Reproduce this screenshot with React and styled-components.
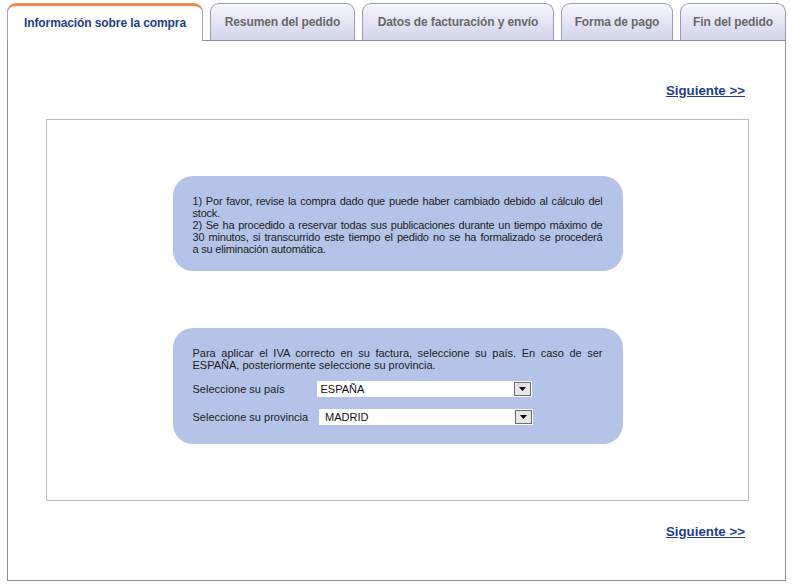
import React from "react";
import styled, { createGlobalStyle } from "styled-components";

const GlobalStyle = createGlobalStyle`
  html, body { margin: 0; padding: 0; background: #ffffff; }
  body { font-family: "Liberation Sans", Arial, sans-serif; }
`;

const Wrapper = styled.div`
  width: 779px;
  margin: 3px 0 0 7px;
`;

const TabBar = styled.div`
  display: flex;
  align-items: flex-end;
  gap: 7px;
  height: 37px;
  border-bottom: 1px solid #8c8ca6;
`;

const Tab = styled.div`
  box-sizing: border-box;
  width: ${(p) => p.$w}px;
  height: ${(p) => (p.$active ? 38 : 37)}px;
  margin-bottom: ${(p) => (p.$active ? -1 : 0)}px;
  display: flex;
  align-items: center;
  justify-content: center;
  font-size: 12px;
  font-weight: bold;
  letter-spacing: -0.1px;
  white-space: nowrap;
  border-radius: 9px 9px 0 0;
  border: 1px solid ${(p) => (p.$active ? "#a2a2b0" : "#9a9ab6")};
  border-bottom: none;
  border-top: ${(p) => (p.$active ? "3px solid #ee8a4e" : "1px solid #9a9ab6")};
  padding-bottom: ${(p) => (p.$active ? 2 : 0)}px;
  color: ${(p) => (p.$active ? "#1f3d8c" : "#686868")};
  background: ${(p) =>
    p.$active ? "#ffffff" : "linear-gradient(#f7f7fc 0%, #e6e6f5 45%, #d3d3ec 100%)"};
`;

const Frame = styled.div`
  border: 1px solid #8c8ca6;
  border-top: none;
  padding: 41px 0;
  display: flex;
  flex-direction: column;
`;

const LinkRow = styled.div`
  display: flex;
  justify-content: flex-end;
  padding-right: 40px;
  height: 16px;
  line-height: 18px;
`;

const NextLink = styled.a`
  font-size: 13.3px;
  font-weight: bold;
  color: #1f3d8c;
  text-decoration: underline;
  cursor: pointer;
`;

const ContentBox = styled.div`
  margin: 21px 36px 22px 38px;
  border: 1px solid #b3bdd2;
  padding: 56px 0;
  display: flex;
  flex-direction: column;
  align-items: center;
  gap: 57px;
`;

const InfoBox = styled.div`
  box-sizing: border-box;
  width: 450px;
  border-radius: 20px;
  background: #b4c4e8;
  padding: 19px 20px ${(p) => p.$pb || 19}px;
  font-size: 11px;
  line-height: 12px;
  color: #1c1c1c;
`;

const Para = styled.p`
  margin: 0;
  text-align: justify;
  letter-spacing: ${(p) => p.$ls || 0}px;
`;

const Form = styled.div`
  display: flex;
  flex-direction: column;
  gap: 12px;
  margin-top: 10px;
`;

const Row = styled.div`
  display: flex;
  align-items: center;
  height: 16px;
`;

const Label = styled.span`
  min-width: 113px;
  margin-right: 11px;
  white-space: nowrap;
`;

const Select = styled.div`
  box-sizing: border-box;
  width: ${(p) => p.$w}px;
  height: 16px;
  background: #ffffff;
  display: flex;
  align-items: center;
  justify-content: space-between;
  padding: 1px 1px 1px ${(p) => p.$pl}px;
  font-size: 11px;
  color: #111;
`;

const Arrow = styled.span`
  box-sizing: border-box;
  width: 17px;
  height: 14px;
  border: 1px solid #6c6c6c;
  background: #e6e6e6;
  display: flex;
  align-items: center;
  justify-content: center;
`;

function DropArrow() {
  return (
    <Arrow>
      <svg width="7" height="4" viewBox="0 0 7 4">
        <polygon points="0,0 7,0 3.5,4" fill="#000" />
      </svg>
    </Arrow>
  );
}

const tabs = [
  { label: "Información sobre la compra", w: 196, active: true },
  { label: "Resumen del pedido", w: 145 },
  { label: "Datos de facturación y envío", w: 192 },
  { label: "Forma de pago", w: 112 },
  { label: "Fin del pedido", w: 106 },
];

const notice1 =
  "1) Por favor, revise la compra dado que puede haber cambiado debido al cálculo del stock.";
const notice2 =
  "2) Se ha procedido a reservar todas sus publicaciones durante un tiempo máximo de 30 minutos, si transcurrido este tiempo el pedido no se ha formalizado se procederá a\u00A0su eliminación automática.";

export default function App() {
  return (
    <>
      <GlobalStyle />
      <Wrapper>
        <TabBar>
          {tabs.map((t) => (
            <Tab key={t.label} $w={t.w} $active={t.active}>
              {t.label}
            </Tab>
          ))}
        </TabBar>
        <Frame>
          <LinkRow>
            <NextLink>Siguiente &gt;&gt;</NextLink>
          </LinkRow>
          <ContentBox>
            <InfoBox $pb={16}>
              <Para $ls={-0.2}>{notice1}</Para>
              <Para $ls={-0.2}>{notice2}</Para>
            </InfoBox>
            <InfoBox>
              <Para>
                Para aplicar el IVA correcto en su factura, seleccione su país. En caso de ser
                ESPAÑA, posteriormente seleccione su provincia.
              </Para>
              <Form>
                <Row>
                  <Label>Seleccione su país</Label>
                  <Select $w={215} $pl={4}>
                    <span>ESPAÑA</span>
                    <DropArrow />
                  </Select>
                </Row>
                <Row>
                  <Label>Seleccione su provincia</Label>
                  <Select $w={214} $pl={6}>
                    <span>MADRID</span>
                    <DropArrow />
                  </Select>
                </Row>
              </Form>
            </InfoBox>
          </ContentBox>
          <LinkRow>
            <NextLink>Siguiente &gt;&gt;</NextLink>
          </LinkRow>
        </Frame>
      </Wrapper>
    </>
  );
}
